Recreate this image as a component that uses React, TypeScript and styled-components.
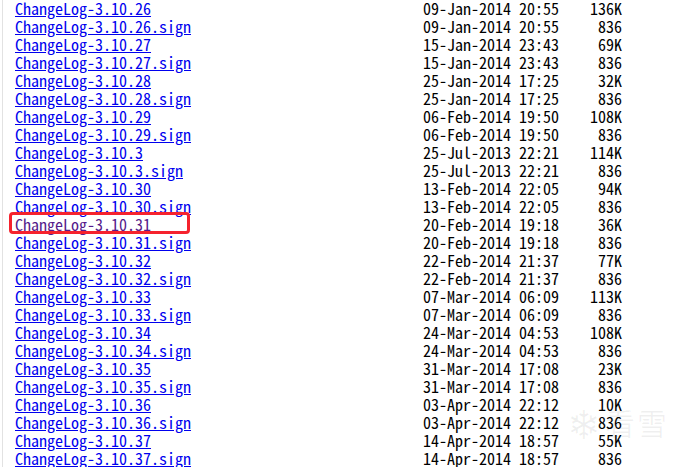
import React from 'react';
import styled, {createGlobalStyle} from 'styled-components';

const GlobalStyle = createGlobalStyle`
  html, body {
    margin: 0;
    padding: 0;
    background: #ffffff;
  }
`

const Page = styled.div`
  position: relative;
  width: 681px;
  height: 467px;
  overflow: hidden;
  box-sizing: border-box;
  margin-left: 2px;
  border-left: 1px solid #e2e2e2;
  padding: 0 0 0 12px;
  font-family: "Noto Sans Mono CJK SC", "Liberation Mono", monospace;
  font-size: 16px;
  line-height: 18px;
  color: #000;
`

const Listing = styled.div`
  position: relative;
  display: flex;
  flex-direction: column;
  margin-top: -1px;
`

const Row = styled.div`
  position: relative;
  display: grid;
  grid-template-columns: 408px 136px 63px;
  height: 18px;
  white-space: pre;
`

const NameLink = styled.a<{visited?: boolean}>`
  color: ${props => props.visited ? "#551a8b" : "#0000ee"};
  text-decoration: underline;
  justify-self: start;
`

const DateCell = styled.span`
  color: #000;
`

const SizeCell = styled.span`
  text-align: right;
`

const Highlight = styled.div`
  position: absolute;
  left: -6px;
  top: -3px;
  width: 181px;
  height: 22px;
  box-sizing: border-box;
  border: 3px solid #f5222d;
  border-radius: 4px;
  pointer-events: none;
`

const Watermark = styled.div`
  position: absolute;
  left: 564px;
  top: 400px;
  display: flex;
  align-items: center;
  gap: 4px;
  color: rgba(0, 0, 0, 0.06);
  font-family: "Noto Sans CJK SC", sans-serif;
  pointer-events: none;
`

const Flake = styled.span`
  font-size: 40px;
  line-height: 44px;
`

const WatermarkText = styled.span`
  font-size: 30px;
  line-height: 44px;
  letter-spacing: 2px;
`

type FileEntry = {
    name: string
    date: string
    size: string
    visited?: boolean
}

const files: FileEntry[] = [
    {name: "ChangeLog-3.10.26", date: "09-Jan-2014 20:55", size: "136K"},
    {name: "ChangeLog-3.10.26.sign", date: "09-Jan-2014 20:55", size: "836"},
    {name: "ChangeLog-3.10.27", date: "15-Jan-2014 23:43", size: "69K"},
    {name: "ChangeLog-3.10.27.sign", date: "15-Jan-2014 23:43", size: "836"},
    {name: "ChangeLog-3.10.28", date: "25-Jan-2014 17:25", size: "32K"},
    {name: "ChangeLog-3.10.28.sign", date: "25-Jan-2014 17:25", size: "836"},
    {name: "ChangeLog-3.10.29", date: "06-Feb-2014 19:50", size: "108K"},
    {name: "ChangeLog-3.10.29.sign", date: "06-Feb-2014 19:50", size: "836"},
    {name: "ChangeLog-3.10.3", date: "25-Jul-2013 22:21", size: "114K"},
    {name: "ChangeLog-3.10.3.sign", date: "25-Jul-2013 22:21", size: "836"},
    {name: "ChangeLog-3.10.30", date: "13-Feb-2014 22:05", size: "94K"},
    {name: "ChangeLog-3.10.30.sign", date: "13-Feb-2014 22:05", size: "836"},
    {name: "ChangeLog-3.10.31", date: "20-Feb-2014 19:18", size: "36K", visited: true},
    {name: "ChangeLog-3.10.31.sign", date: "20-Feb-2014 19:18", size: "836"},
    {name: "ChangeLog-3.10.32", date: "22-Feb-2014 21:37", size: "77K"},
    {name: "ChangeLog-3.10.32.sign", date: "22-Feb-2014 21:37", size: "836"},
    {name: "ChangeLog-3.10.33", date: "07-Mar-2014 06:09", size: "113K"},
    {name: "ChangeLog-3.10.33.sign", date: "07-Mar-2014 06:09", size: "836"},
    {name: "ChangeLog-3.10.34", date: "24-Mar-2014 04:53", size: "108K"},
    {name: "ChangeLog-3.10.34.sign", date: "24-Mar-2014 04:53", size: "836"},
    {name: "ChangeLog-3.10.35", date: "31-Mar-2014 17:08", size: "23K"},
    {name: "ChangeLog-3.10.35.sign", date: "31-Mar-2014 17:08", size: "836"},
    {name: "ChangeLog-3.10.36", date: "03-Apr-2014 22:12", size: "10K"},
    {name: "ChangeLog-3.10.36.sign", date: "03-Apr-2014 22:12", size: "836"},
    {name: "ChangeLog-3.10.37", date: "14-Apr-2014 18:57", size: "55K"},
    {name: "ChangeLog-3.10.37.sign", date: "14-Apr-2014 18:57", size: "836"},
]

const App = () => {
    return (
        <>
            <GlobalStyle/>
            <Page>
                <Watermark>
                    <Flake>❄</Flake>
                    <WatermarkText>看雪</WatermarkText>
                </Watermark>
                <Listing>
                    {files.map(file =>
                        <Row key={file.name}>
                            <NameLink href={"#" + file.name} visited={file.visited}>{file.name}</NameLink>
                            <DateCell>{file.date}</DateCell>
                            <SizeCell>{file.size}</SizeCell>
                            {file.visited && <Highlight/>}
                        </Row>
                    )}
                </Listing>
            </Page>
        </>
    );
};

export default App;
